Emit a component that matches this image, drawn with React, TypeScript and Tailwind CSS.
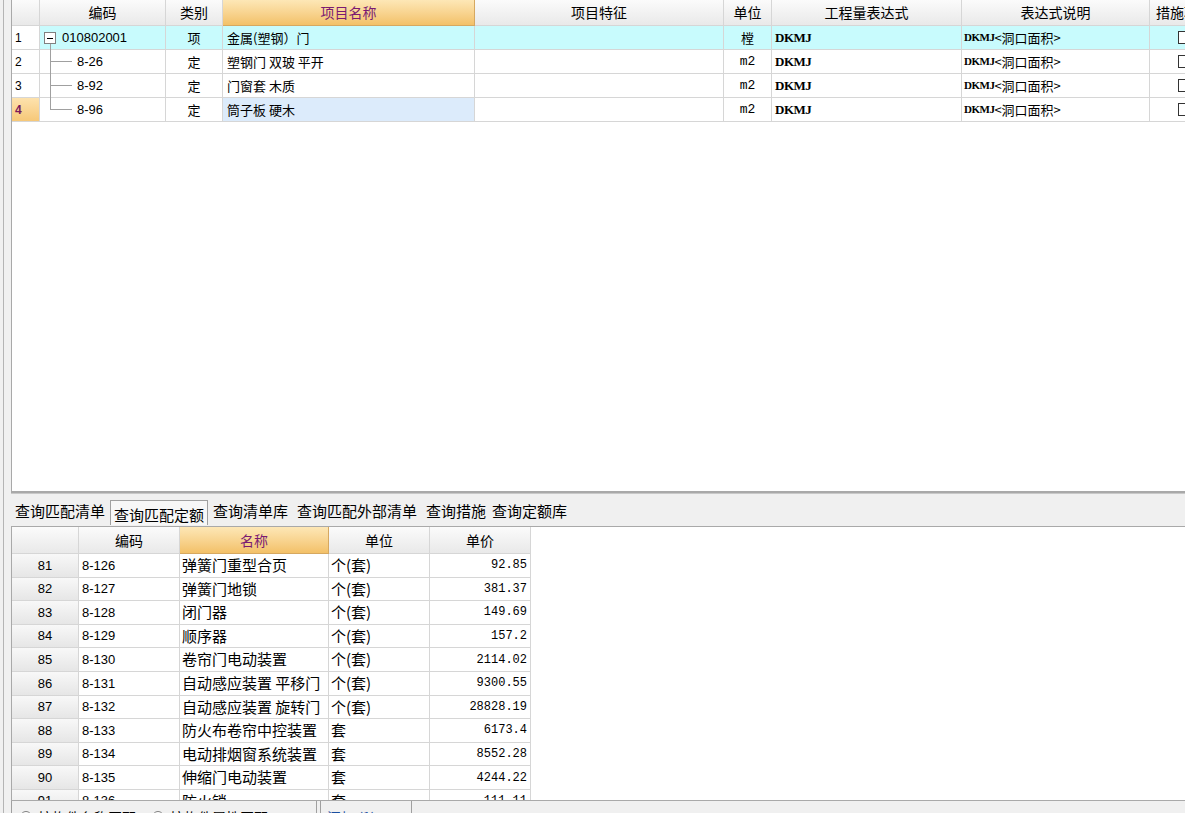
import React from "react";

const topCols = "grid grid-cols-[28px_126px_57px_252px_249px_48px_190px_188px_80px]";
const lowCols = "grid grid-cols-[67px_101px_149px_101px_101px]";

const topRows = [
  { n: "1", code: "010802001", type: "项", name: "金属(塑钢）门", unit: "樘", expr: "DKMJ", desc: "DKMJ<洞口面积>", parent: true },
  { n: "2", code: "8-26", type: "定", name: "塑钢门 双玻 平开", unit: "m2", expr: "DKMJ", desc: "DKMJ<洞口面积>" },
  { n: "3", code: "8-92", type: "定", name: "门窗套 木质", unit: "m2", expr: "DKMJ", desc: "DKMJ<洞口面积>" },
  { n: "4", code: "8-96", type: "定", name: "筒子板 硬木", unit: "m2", expr: "DKMJ", desc: "DKMJ<洞口面积>", current: true },
];

const quotas = [
  ["81", "8-126", "弹簧门重型合页", "个(套)", "92.85"],
  ["82", "8-127", "弹簧门地锁", "个(套)", "381.37"],
  ["83", "8-128", "闭门器", "个(套)", "149.69"],
  ["84", "8-129", "顺序器", "个(套)", "157.2"],
  ["85", "8-130", "卷帘门电动装置", "个(套)", "2114.02"],
  ["86", "8-131", "自动感应装置 平移门", "个(套)", "9300.55"],
  ["87", "8-132", "自动感应装置 旋转门", "个(套)", "28828.19"],
  ["88", "8-133", "防火布卷帘中控装置", "套", "6173.4"],
  ["89", "8-134", "电动排烟窗系统装置", "套", "8552.28"],
  ["90", "8-135", "伸缩门电动装置", "套", "4244.22"],
  ["91", "8-136", "防火锁", "套", "111.11"],
];

const tabs = ["查询匹配清单", "查询匹配定额", "查询清单库", "查询匹配外部清单", "查询措施", "查询定额库"];

const headCell = "flex items-center justify-center border-r border-b border-[#d6d6d6] bg-gradient-to-b from-[#fbfbfb] to-[#e9e9e9] text-[14px] text-black";
const activeHead = "flex items-center justify-center border-r border-b border-[#d6a860] bg-gradient-to-b from-[#fde7b6] to-[#f3c168] text-[14px] text-[#7a1a72]";

export default function App() {
  return (
    <div className="w-[1185px] h-[813px] overflow-hidden flex bg-[#f0f0f0] font-['Noto_Sans_CJK_SC',sans-serif] text-black">
      {/* left splitter strip */}
      <div className="w-[11px] shrink-0 flex">
        <div className="w-[3px] bg-[#f0f0f0]" />
        <div className="w-px bg-[#b4b4b4]" />
        <div className="flex-1 bg-[#f0f0f0]" />
      </div>

      <div className="flex-1 flex flex-col min-w-0">
        {/* top grid */}
        <div className="h-[493px] shrink-0 bg-white border-l border-b-2 border-[#a9a9a9] overflow-hidden">
          <div className={`${topCols} h-[26px]`}>
            <div className={headCell} />
            <div className={headCell}>编码</div>
            <div className={headCell}>类别</div>
            <div className={activeHead}>项目名称</div>
            <div className={headCell}>项目特征</div>
            <div className={headCell}>单位</div>
            <div className={headCell}>工程量表达式</div>
            <div className={headCell}>表达式说明</div>
            <div className={`${headCell} !justify-start pl-[6px]`}>措施项目</div>
          </div>
          {topRows.map((r, i) => {
            const rowBg = r.parent ? "bg-[#c8fbfd]" : "bg-white";
            const cell = `flex items-center border-r border-b border-[#d6d6d6] text-[13px] ${rowBg}`;
            return (
              <div key={r.n} className={`${topCols} h-[24px]`}>
                <div
                  className={`flex items-center pl-[3px] border-r border-b border-[#d6d6d6] text-[12px] font-['Liberation_Sans',sans-serif] ${
                    r.current ? "bg-gradient-to-b from-[#fde2ad] to-[#f6c878] text-[#7a1a5a] font-bold" : "bg-white"
                  }`}
                >
                  {r.n}
                </div>
                <div className={`${cell} relative font-['Liberation_Sans',sans-serif] text-[12px]`}>
                  {r.parent ? (
                    <>
                      <span className="absolute left-[4px] top-[6px] w-[12px] h-[12px] border border-[#808080] bg-white flex items-center justify-center">
                        <span className="w-[6px] h-px bg-black" />
                      </span>
                      <span className="absolute left-[10px] top-[18px] w-px h-[7px] bg-[#a0a0a0]" />
                      <span className="pl-[22px]">{r.code}</span>
                    </>
                  ) : (
                    <>
                      <span className={`absolute left-[10px] top-0 w-px bg-[#a0a0a0] ${i === topRows.length - 1 ? "h-[12px]" : "h-[24px]"}`} />
                      <span className="absolute left-[10px] top-[11px] w-[22px] h-px bg-[#a0a0a0]" />
                      <span className="pl-[37px]">{r.code}</span>
                    </>
                  )}
                </div>
                <div className={`${cell} justify-center`}>{r.type}</div>
                <div className={`${cell} pl-[4px] ${r.current ? "!bg-[#dcebfb]" : ""}`}>{r.name}</div>
                <div className={cell} />
                <div className={`${cell} justify-center ${r.parent ? "" : "font-['Liberation_Mono',monospace] text-[11px]"}`}>{r.unit}</div>
                <div className={`${cell} pl-[3px] font-['Liberation_Serif',serif] font-bold text-[11px] tracking-[-0.5px]`}>{r.expr}</div>
                <div className={`${cell} pl-[2px]`}>
                  <span className="font-['Liberation_Serif',serif] font-bold text-[11px] tracking-[-0.5px]">DKMJ</span>
                  <span className="text-[13px]">&lt;洞口面积&gt;</span>
                </div>
                <div className={`${cell} pl-[28px]`}>
                  <span className="w-[13px] h-[13px] border border-[#333] bg-white" />
                </div>
              </div>
            );
          })}
        </div>

        {/* tab strip */}
        <div className="h-[33px] shrink-0 border-t border-[#c8c8c8] flex items-end pl-[3px] gap-[4px] text-[15px] leading-none">
          {tabs.map((t, i) =>
            i === 1 ? (
              <div key={t} className="h-[25px] px-[3px] flex items-center pt-[3px] border border-[#a0a0a0] border-b-0 bg-[#f7f7f7] mb-[1px]">
                {t}
              </div>
            ) : (
              <div key={t} className={`h-[27px] flex items-start pt-[4px] ${i === 3 ? "px-[4px]" : "px-[1px]"}`}>
                {t}
              </div>
            )
          )}
        </div>

        {/* lower grid */}
        <div className="flex-1 min-h-0 bg-white border-l border-t border-[#a9a9a9] overflow-hidden">
          <div className="w-[520px]">
            <div className={`${lowCols} h-[27px]`}>
              <div className={headCell} />
              <div className={headCell}>编码</div>
              <div className={activeHead}>名称</div>
              <div className={headCell}>单位</div>
              <div className={headCell}>单价</div>
            </div>
            {quotas.map((q) => (
              <div key={q[0]} className={`${lowCols} h-[23.6px]`}>
                <div className="flex items-center justify-center border-r border-b border-[#d6d6d6] bg-gradient-to-b from-[#f8f8f8] to-[#e6e6e6] text-[13px] font-['Liberation_Sans',sans-serif]">
                  {q[0]}
                </div>
                <div className="flex items-center pl-[3px] border-r border-b border-[#d6d6d6] text-[13px] font-['Liberation_Sans',sans-serif]">
                  {q[1]}
                </div>
                <div className="flex items-center pl-[2px] border-r border-b border-[#d6d6d6] text-[15px] whitespace-nowrap overflow-hidden">
                  {q[2]}
                </div>
                <div className="flex items-center pl-[2px] border-r border-b border-[#d6d6d6] text-[15px]">{q[3]}</div>
                <div className="flex items-center justify-end pr-[3px] border-r border-b border-[#d6d6d6] text-[12px] font-['Liberation_Mono',monospace]">
                  {q[4]}
                </div>
              </div>
            ))}
          </div>
        </div>

        {/* status bar, cut by the window edge */}
        <div className="h-[13px] shrink-0 border-t border-[#a9a9a9] overflow-hidden">
          <div className="h-[26px] flex text-[14px]">
            <div className="w-[306px] border-l border-r border-[#a0a0a0] flex items-center gap-[6px] pl-[8px] pt-[6px]">
              <span className="w-[12px] h-[12px] rounded-full border border-[#808080] bg-white" />
              <span>按构件名称匹配</span>
              <span className="w-[12px] h-[12px] rounded-full border border-[#808080] bg-white ml-[10px]" />
              <span>按构件属性匹配</span>
            </div>
            <div className="w-[92px] ml-[3px] border-l border-r border-[#a0a0a0] flex items-center pl-[6px] pt-[6px] text-[#1a4fa0]">
              添加 (1)
            </div>
          </div>
        </div>
      </div>
    </div>
  );
}
